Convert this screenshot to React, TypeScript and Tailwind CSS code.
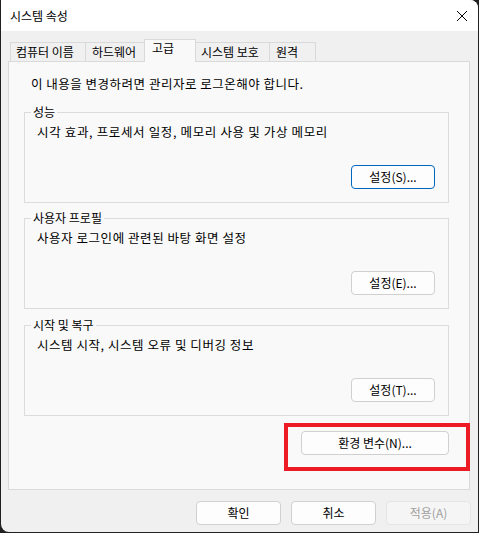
import React from 'react';

const font = { fontFamily: '"Noto Sans CJK KR", "Noto Sans", sans-serif' };

type BtnProps = { label: string; width?: string; primary?: boolean; disabled?: boolean };

function Btn({ label, width = 'w-[84px]', primary, disabled }: BtnProps) {
  const base = 'h-[24px] rounded-[4px] border text-[12px] leading-[16px] flex items-center justify-center';
  let look = 'bg-[#fdfdfd] border-[#d0d0d0] text-black';
  if (primary) look = 'bg-[#fdfdfd] border-[#0067c0] text-black';
  if (disabled) look = 'bg-[#f5f5f5] border-[#e5e5e5] text-[#a0a0a0]';
  return <div className={`${base} ${width} ${look}`}>{label}</div>;
}

type GroupProps = { title: string; desc: string; descClass: string; button: string; primary?: boolean };

function Group({ title, desc, descClass, button, primary }: GroupProps) {
  return (
    <fieldset className="border border-[#dcdcdc] pl-[6px] pr-[13px] pt-[4px] pb-[13px] m-0 min-w-0">
      <legend className="px-[2px] text-[12px] leading-[16px] text-black">{title}</legend>
      <div className={`ml-[6px] text-[12.5px] leading-[16px] text-black whitespace-nowrap ${descClass}`}>{desc}</div>
      <div className="mt-[25px] flex justify-end">
        <Btn label={button} primary={primary} />
      </div>
    </fieldset>
  );
}

export default function App() {
  return (
    <div className="w-[479px] h-[533px] bg-[#202020] overflow-hidden" style={font}>
      <div className="ml-px mr-px h-[532px] bg-[#f0f0f0] rounded-tr-lg rounded-bl-lg overflow-hidden flex flex-col">
        {/* title bar */}
        <div className="h-[31px] bg-white flex items-center justify-between pl-[9px] pr-[9px] shrink-0">
          <span className="text-[12px] leading-[16px] text-black">시스템 속성</span>
          <svg width="12" height="12" viewBox="0 0 12 12" className="mr-[1px]">
            <path d="M1 1 L11 11 M11 1 L1 11" stroke="#000" strokeWidth="1" fill="none" />
          </svg>
        </div>

        {/* tabs */}
        <div className="ml-[9px] mt-[8px] h-[22px] flex items-end text-[12px] text-black shrink-0">
          <div className="w-[75px] h-[19px] border-l border-t border-[#d9d9d9] pl-[5px] leading-[18px]">컴퓨터 이름</div>
          <div className="w-[59px] h-[19px] border-l border-t border-[#d9d9d9] pl-[6px] leading-[18px]">하드웨어</div>
          <div className="relative z-10 w-[52px] h-[23px] -mb-px border-l border-t border-r border-[#d9d9d9] bg-[#f9f9f9] pl-[7px] leading-[14px] pt-[1px]">고급</div>
          <div className="w-[73px] h-[19px] border-t border-[#d9d9d9] pl-[5px] leading-[18px]">시스템 보호</div>
          <div className="w-[47px] h-[19px] border-l border-t border-r border-[#d9d9d9] pl-[6px] leading-[18px]">원격</div>
        </div>

        {/* panel */}
        <div className="ml-[7px] mr-[8px] h-[429px] border border-[#dadada] bg-[#f9f9f9] pl-[15px] pr-[20px] pt-[14px] shrink-0">
          <div className="ml-[7px] text-[12.5px] leading-[16px] text-black tracking-[0.5px] whitespace-nowrap">
            이 내용을 변경하려면 관리자로 로그온해야 합니다.
          </div>
          <div className="mt-[12px]">
            <Group
              title="성능"
              desc="시각 효과, 프로세서 일정, 메모리 사용 및 가상 메모리"
              descClass="tracking-[0.65px]"
              button="설정(S)..."
              primary
            />
          </div>
          <div className="mt-[7px]">
            <Group
              title="사용자 프로필"
              desc="사용자 로그인에 관련된 바탕 화면 설정"
              descClass="tracking-[0.55px]"
              button="설정(E)..."
            />
          </div>
          <div className="mt-[8px]">
            <Group
              title="시작 및 복구"
              desc="시스템 시작, 시스템 오류 및 디버깅 정보"
              descClass="tracking-[0.55px]"
              button="설정(T)..."
            />
          </div>
          <div className="mt-[15px] flex justify-end">
            <div className="relative">
              <Btn label="환경 변수(N)..." width="w-[148px]" />
              {/* red highlight annotation */}
              <div className="absolute -left-[17px] -top-[8px] -right-[21px] -bottom-[16px] border-4 border-[#ed1c24] pointer-events-none" />
            </div>
          </div>
        </div>

        {/* bottom buttons */}
        <div className="mt-[11px] pr-[7px] flex justify-end gap-[10px] shrink-0">
          <Btn label="확인" width="w-[85px]" />
          <Btn label="취소" width="w-[85px]" />
          <Btn label="적용(A)" width="w-[85px]" disabled />
        </div>
      </div>
    </div>
  );
}
